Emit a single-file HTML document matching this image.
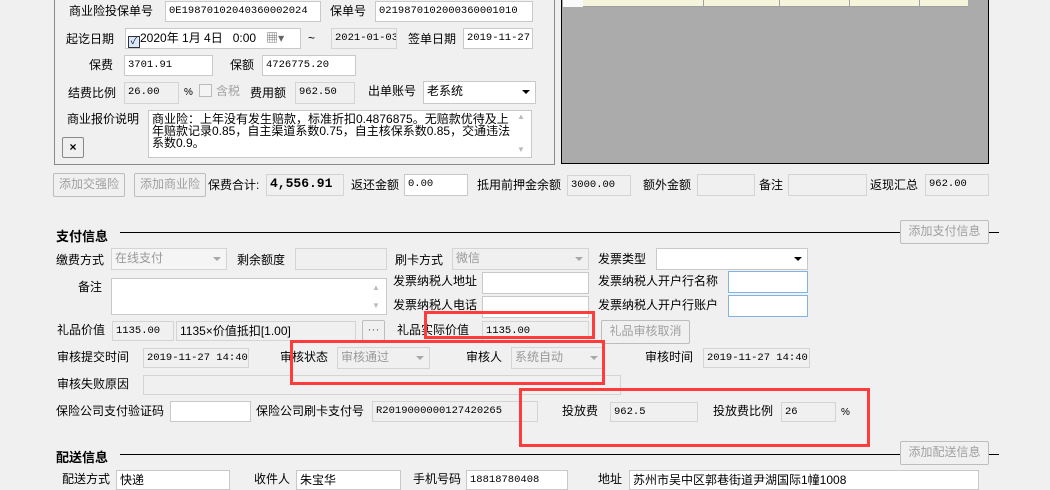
<!DOCTYPE html>
<html><head><meta charset="utf-8"><style>
*{box-sizing:border-box;margin:0;padding:0}
body{width:1050px;height:477px;background:#f0f0f0;position:relative;overflow:hidden;font:12px "Liberation Sans","Noto Sans CJK SC",sans-serif;color:#000}
.a{position:absolute;white-space:nowrap}
.l{position:absolute;white-space:nowrap;line-height:14px}
.i{position:absolute;background:#fff;border:1px solid #c9c9c9;font:10.5px "Liberation Mono","Noto Sans CJK SC",monospace;padding:2px 3px;line-height:14px;white-space:nowrap;overflow:hidden}
.g{background:#f0f0f0;border-color:#d4d4d4}
.bl{border-color:#7eb4ea}
.btn{position:absolute;border:1px solid #bdbdbd;border-radius:2px;background:#f0f0f0;color:#a0a0a0;text-align:center;line-height:20px}
.dd{position:absolute;right:5px;top:8px;width:0;height:0;border-left:4px solid transparent;border-right:4px solid transparent;border-top:4px solid #000}
.ddg{border-top-color:#a8a8a8}
.red{position:absolute;border:3px solid #ff3b3b}
.hl{position:absolute;height:1px;background:#000}
.h{position:absolute;font-weight:bold;font-size:13px}
</style></head><body>
<div class="a" style="left:54px;top:-2px;width:501px;height:167px;border:1px solid #8a8a8a;border-top:none"></div>
<div class="a" style="left:561px;top:-2px;width:428px;height:166px;background:#ababab;border:1px solid #000;border-top:none"></div>
<div class="a" style="left:563px;top:0;width:20px;height:7px;background:#fafafa"></div>
<div class="a" style="left:583px;top:0;width:385px;height:7px;background:#f5f5dc;border-bottom:1px solid #a0a0a0"></div>
<div class="a" style="left:703px;top:0;width:1px;height:7px;background:#a0a0a0"></div>
<div class="a" style="left:779px;top:0;width:1px;height:7px;background:#a0a0a0"></div>
<div class="a" style="left:849px;top:0;width:1px;height:7px;background:#a0a0a0"></div>
<div class="a" style="left:919px;top:0;width:1px;height:7px;background:#a0a0a0"></div>

<div class="l" style="left:69px;top:4px">商业险投保单号</div>
<div class="i" style="left:165px;top:1px;width:156px;height:21px">0E19870102040360002024</div>
<div class="l" style="left:330px;top:4px">保单号</div>
<div class="i" style="left:375px;top:1px;width:158px;height:21px">0219870102000360001010</div>

<div class="l" style="left:66px;top:32px">起讫日期</div>
<div class="i" style="left:125px;top:28px;width:176px;height:21px;font-family:'Liberation Sans','Noto Sans CJK SC',sans-serif;font-size:12px;padding-left:2px"><span style="display:inline-block;width:12px;height:12px;border:1px solid #333;background:#dbe8fb;vertical-align:-2px;font-size:10px;line-height:10px;color:#224;text-align:center">✓</span>2020年 1月 4日 &nbsp; 0:00 &nbsp; <span style="color:#666">▦▾</span></div>
<div class="l" style="left:308px;top:31px">~</div>
<div class="i g" style="left:331px;top:28px;width:66px;height:21px">2021-01-03</div>
<div class="l" style="left:408px;top:32px">签单日期</div>
<div class="i" style="left:463px;top:28px;width:70px;height:21px">2019-11-27</div>

<div class="l" style="left:89px;top:58px">保费</div>
<div class="i" style="left:124px;top:55px;width:89px;height:21px">3701.91</div>
<div class="l" style="left:230px;top:58px">保额</div>
<div class="i" style="left:262px;top:55px;width:94px;height:21px">4726775.20</div>

<div class="l" style="left:68px;top:86px">结费比例</div>
<div class="i g" style="left:124px;top:82px;width:55px;height:22px">26.00</div>
<div class="l" style="left:184px;top:86px;font-size:10px">%</div>
<div class="a" style="left:199px;top:84px;width:13px;height:13px;border:1px solid #bbb;background:#f4f4f4"></div>
<div class="l" style="left:216px;top:84px;color:#a0a0a0">含税</div>
<div class="l" style="left:250px;top:86px">费用额</div>
<div class="i g" style="left:295px;top:82px;width:60px;height:22px">962.50</div>
<div class="l" style="left:368px;top:84px">出单账号</div>
<div class="i" style="left:423px;top:81px;width:113px;height:23px;font-family:'Liberation Sans','Noto Sans CJK SC',sans-serif;font-size:12px">老系统<div class="dd"></div></div>

<div class="l" style="left:67px;top:112px">商业报价说明</div>
<div class="i" style="left:148px;top:110px;width:384px;height:48px;font-family:'Liberation Sans','Noto Sans CJK SC',sans-serif;font-size:12px;line-height:12px;white-space:normal;padding:2px 16px 0 3px">商业险：上年没有发生赔款，标准折扣0.4876875。无赔款优待及上年赔款记录0.85，自主渠道系数0.75，自主核保系数0.85，交通违法系数0.9。</div>
<div class="a" style="left:517px;top:112px;color:#bbb;font-size:8px">▲</div>
<div class="a" style="left:517px;top:145px;color:#bbb;font-size:8px">▼</div>
<div class="btn" style="left:62px;top:137px;width:22px;height:21px;color:#000;border-color:#888;line-height:18px;font-weight:bold">×</div>

<div class="btn" style="left:53px;top:173px;width:72px;height:24px">添加交强险</div>
<div class="btn" style="left:134px;top:173px;width:72px;height:24px">添加商业险</div>
<div class="l" style="left:208px;top:178px">保费合计:</div>
<div class="i g" style="left:266px;top:174px;width:78px;height:22px;font-weight:bold;font-size:13px">4,556.91</div>
<div class="l" style="left:351px;top:178px">返还金额</div>
<div class="i" style="left:404px;top:174px;width:64px;height:22px">0.00</div>
<div class="l" style="left:477px;top:178px">抵用前押金余额</div>
<div class="i g" style="left:567px;top:175px;width:64px;height:21px">3000.00</div>
<div class="l" style="left:643px;top:178px">额外金额</div>
<div class="i g" style="left:697px;top:174px;width:58px;height:22px"></div>
<div class="l" style="left:759px;top:178px">备注</div>
<div class="i g" style="left:788px;top:174px;width:79px;height:22px"></div>
<div class="l" style="left:870px;top:178px">返现汇总</div>
<div class="i g" style="left:925px;top:174px;width:64px;height:22px">962.00</div>

<div class="h" style="left:56px;top:226px">支付信息</div>
<div class="hl" style="left:120px;top:232px;width:780px"></div>
<div class="hl" style="left:989px;top:232px;width:10px"></div>
<div class="btn" style="left:900px;top:220px;width:89px;height:24px">添加支付信息</div>

<div class="l" style="left:56px;top:253px">缴费方式</div>
<div class="i g" style="left:111px;top:248px;width:116px;height:22px;font-family:'Liberation Sans','Noto Sans CJK SC',sans-serif;font-size:12px;color:#999;background:#f5f5f5">在线支付<div class="dd ddg"></div></div>
<div class="l" style="left:237px;top:253px">剩余额度</div>
<div class="i g" style="left:295px;top:248px;width:92px;height:22px"></div>
<div class="l" style="left:395px;top:253px">刷卡方式</div>
<div class="i g" style="left:452px;top:248px;width:137px;height:22px;font-family:'Liberation Sans','Noto Sans CJK SC',sans-serif;font-size:12px;color:#999">微信<div class="dd ddg"></div></div>
<div class="l" style="left:598px;top:252px">发票类型</div>
<div class="i" style="left:656px;top:248px;width:152px;height:22px"><div class="dd"></div></div>

<div class="l" style="left:78px;top:280px">备注</div>
<div class="i" style="left:111px;top:278px;width:276px;height:37px"></div>
<div class="a" style="left:372px;top:283px;color:#bbb;font-size:8px">▲</div>
<div class="a" style="left:372px;top:301px;color:#bbb;font-size:8px">▼</div>
<div class="l" style="left:393px;top:274px">发票纳税人地址</div>
<div class="i" style="left:482px;top:272px;width:107px;height:22px"></div>
<div class="l" style="left:598px;top:274px">发票纳税人开户行名称</div>
<div class="i bl" style="left:728px;top:271px;width:80px;height:22px"></div>
<div class="l" style="left:393px;top:298px">发票纳税人电话</div>
<div class="i" style="left:482px;top:296px;width:107px;height:22px"></div>
<div class="l" style="left:598px;top:298px">发票纳税人开户行账户</div>
<div class="i bl" style="left:728px;top:295px;width:80px;height:22px"></div>

<div class="l" style="left:57px;top:323px">礼品价值</div>
<div class="i g" style="left:112px;top:321px;width:62px;height:20px">1135.00</div>
<div class="i g" style="left:176px;top:321px;width:180px;height:20px;font-family:'Liberation Sans','Noto Sans CJK SC',sans-serif;font-size:12px">1135×价值抵扣[1.00]</div>
<div class="btn" style="left:362px;top:320px;width:23px;height:21px;line-height:16px;color:#666">···</div>
<div class="l" style="left:397px;top:323px">礼品实际价值</div>
<div class="i g" style="left:482px;top:321px;width:107px;height:20px">1135.00</div>
<div class="btn" style="left:601px;top:320px;width:89px;height:24px">礼品审核取消</div>

<div class="l" style="left:57px;top:350px">审核提交时间</div>
<div class="i g" style="left:143px;top:348px;width:106px;height:20px">2019-11-27 14:40:</div>
<div class="l" style="left:280px;top:350px">审核状态</div>
<div class="i g" style="left:337px;top:347px;width:93px;height:22px;font-family:'Liberation Sans','Noto Sans CJK SC',sans-serif;font-size:12px;color:#999">审核通过<div class="dd ddg"></div></div>
<div class="l" style="left:466px;top:350px">审核人</div>
<div class="i g" style="left:511px;top:347px;width:93px;height:22px;font-family:'Liberation Sans','Noto Sans CJK SC',sans-serif;font-size:12px;color:#999">系统自动<div class="dd ddg"></div></div>
<div class="l" style="left:645px;top:350px">审核时间</div>
<div class="i g" style="left:703px;top:348px;width:107px;height:20px">2019-11-27 14:40:</div>

<div class="l" style="left:57px;top:377px">审核失败原因</div>
<div class="i g" style="left:143px;top:375px;width:478px;height:20px"></div>

<div class="l" style="left:56px;top:404px">保险公司支付验证码</div>
<div class="i" style="left:170px;top:401px;width:81px;height:21px"></div>
<div class="l" style="left:256px;top:404px">保险公司刷卡支付号</div>
<div class="i g" style="left:372px;top:401px;width:166px;height:21px">R2019000000127420265</div>
<div class="l" style="left:562px;top:404px">投放费</div>
<div class="i g" style="left:610px;top:402px;width:88px;height:20px">962.5</div>
<div class="l" style="left:713px;top:404px">投放费比例</div>
<div class="i g" style="left:781px;top:402px;width:55px;height:20px">26</div>
<div class="l" style="left:841px;top:406px;font-size:10px">%</div>

<div class="h" style="left:56px;top:447px">配送信息</div>
<div class="hl" style="left:120px;top:454px;width:780px"></div>
<div class="hl" style="left:989px;top:454px;width:10px"></div>
<div class="btn" style="left:900px;top:441px;width:89px;height:24px">添加配送信息</div>

<div class="l" style="left:62px;top:472px">配送方式</div>
<div class="i" style="left:116px;top:470px;width:114px;height:20px;font-family:'Liberation Sans','Noto Sans CJK SC',sans-serif;font-size:12px">快递</div>
<div class="l" style="left:254px;top:472px">收件人</div>
<div class="i" style="left:296px;top:470px;width:105px;height:20px;font-family:'Liberation Sans','Noto Sans CJK SC',sans-serif;font-size:12px">朱宝华</div>
<div class="l" style="left:413px;top:472px">手机号码</div>
<div class="i" style="left:466px;top:470px;width:102px;height:20px">18818780408</div>
<div class="l" style="left:598px;top:472px">地址</div>
<div class="i" style="left:629px;top:470px;width:350px;height:20px;font-family:'Liberation Sans','Noto Sans CJK SC',sans-serif;font-size:12px">苏州市吴中区郭巷街道尹湖国际1幢1008</div>

<div class="red" style="left:424px;top:311px;width:171px;height:28px"></div>
<div class="red" style="left:290px;top:340px;width:315px;height:45px"></div>
<div class="red" style="left:519px;top:388px;width:351px;height:59px"></div>
</body></html>
